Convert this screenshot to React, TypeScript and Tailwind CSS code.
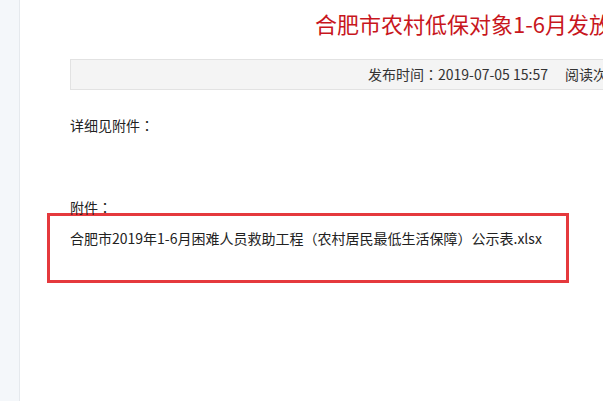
function Punct({ ch }: { ch: string }) {
    // centred full-width punctuation, as in the original font
    return <span className="font-['Noto_Sans_CJK_TC',sans-serif]">{ch}</span>
}

export default function App() {
    return (
        <div className="flex h-[401px] w-[603px] overflow-hidden bg-white font-['Noto_Sans_CJK_SC',sans-serif] text-[#222]">
            {/* left strip */}
            <div className="w-[20px] shrink-0 border-r border-[#e5e9ed] bg-[#f4f7fa]" />
            <div className="min-w-0 flex-1 overflow-hidden pl-[50px]">
                <h1 className="whitespace-nowrap pl-[245px] pt-[10px] text-[22px] leading-[27px] text-[#c8161d]">
                    合肥市农村低保对象1-6月发放情况公示
                </h1>
                <div className="mt-[22px] h-[31px] w-[700px] whitespace-nowrap border border-[#e2e2e2] bg-[#f4f4f4] pl-[297px] text-[14px] leading-[29px] text-[#333]">
                    发布时间<Punct ch="：" />2019-07-05 15:57<span className="ml-[17px]">阅读次数<Punct ch="：" /></span>
                </div>
                <p className="mt-[25px] text-[14px] leading-[20px]">详细见附件<Punct ch="：" /></p>
                <p className="mt-[62px] text-[14px] leading-[20px]">附件<Punct ch="：" /></p>
                <div className="-ml-[23px] mt-[-4px] h-[70px] w-[522px] border-[3px] border-[#e5393d] pl-[20px] pt-[12px]">
                    <p className="whitespace-nowrap text-[14px] leading-[20px]">
                        合肥市2019年1-6月困难人员救助工程<Punct ch="（" />农村居民最低生活保障<Punct ch="）" />公示表.xlsx
                    </p>
                </div>
            </div>
        </div>
    )
}
